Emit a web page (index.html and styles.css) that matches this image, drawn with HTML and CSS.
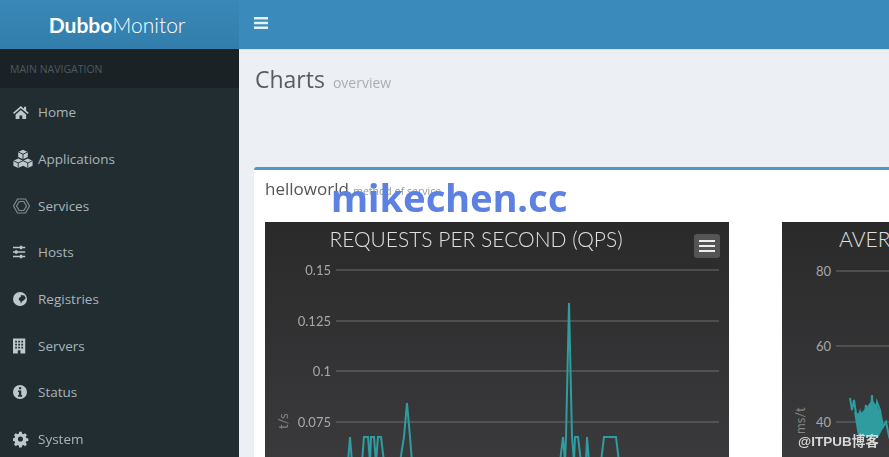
FILE: index.html
```html
<!DOCTYPE html>
<html lang="zh">
  <head>
    <meta charset="UTF-8" />
    <meta name="viewport" content="width=device-width, initial-scale=1" />
    <title>DubboMonitor – Charts</title>
    <link rel="stylesheet" href="styles.css">
  </head>
  <body>
    <div class="wrapper">
      <aside class="sidebar">
        <div class="logo"><b>Dubbo</b>Monitor</div>
        <div class="nav-header">MAIN NAVIGATION</div>
        <nav class="nav">
          <a href="#">
            <svg class="nav-icon" viewBox="1 -1.430 22.860 22.860"><path d="M10 3 1 11l1.200 1.300L10 5.600l7.800 6.700L19 11l-3-2.600V4h-2.400v2.300zM4 13v5h4.400v-4h3.200v4H16v-5l-6-5.200z"/></svg>
            Home
          </a>
          <a href="#">
            <svg class="nav-icon icon-cubes" viewBox="0.400 0.400 19.200 19.200"><path d="m10 1 4.600 2.200v4.800L10 10.200 5.400 8V3.200zM5.400 9.400 10 11.600v4.800l-4.600 2.300-4.600-2.300v-4.800zm9.200 0 4.600 2.200v4.800l-4.600 2.300-4.600-2.300v-4.800z"/><path class="cube-edge" d="M5.400 3.200 10 5.400l4.600-2.200M10 5.400V10M.8 11.600l4.600 2.200 4.600-2.200M5.400 13.800v4.600M10 11.600l4.600 2.200 4.600-2.200M14.600 13.800v4.600"/></svg>
            Applications
          </a>
          <a href="#">
            <svg class="nav-icon nav-icon-line" viewBox="1.500 0 20 20"><path d="M2 10 6 3h8l4 7-4 7H6z"/><path d="M5 10 7.700 5.500h4.600L15 10l-2.700 4.500H7.700z"/></svg>
            Services
          </a>
          <a href="#">
            <svg class="nav-icon" viewBox="3 -1.430 22.860 22.860"><path d="M3 4h8V2.800h2.500V4H17v1.600h-3.500v1.200H11V5.600H3zm0 5.200h2.500V8H8v1.200h9v1.600H8V12H5.500v-1.200H3zm0 5.200h8v-1.200h2.500v1.200H17V16h-3.500v1.200H11V16H3z"/></svg>
            Hosts
          </a>
          <a href="#">
            <svg class="nav-icon" viewBox="2 -1.430 22.860 22.860"><path fill-rule="evenodd" d="M10 2a8 8 0 1 0 0 16 8 8 0 0 0 0-16zM11 5.500l4 .5 1.500 3-2 2.500-2 1-1.500 3-.5-3-2-1.500.5-2.500 2-1z"/></svg>
            Registries
          </a>
          <a href="#">
            <svg class="nav-icon" viewBox="3 -1.430 22.860 22.860"><path fill-rule="evenodd" d="M3 1.500h14v17H3zM5.500 4v2h2V4zm3.500 0v2h2V4zm3.500 0v2h2V4zM5.500 7.500v2h2v-2zm3.500 0v2h2v-2zm3.500 0v2h2v-2zM5.500 11v2h2v-2zm3.500 0v2h2v-2zm3.500 0v2h2v-2zM8.500 15v3.500h3V15z"/></svg>
            Servers
          </a>
          <a href="#">
            <svg class="nav-icon" viewBox="2 -1.430 22.860 22.860"><path fill-rule="evenodd" d="M10 2a8 8 0 1 0 0 16 8 8 0 0 0 0-16zM8.800 4.500h2.600v2.400H8.800zM7.800 8.200h3.600v5.300h1v1.800H7.800v-1.800h1V10h-1z"/></svg>
            Status
          </a>
          <a href="#">
            <svg class="nav-icon" viewBox="1.500 -1.430 22.860 22.860"><path fill-rule="evenodd" d="M8.500 1.800h3l.4 2.300 1.500.6 1.900-1.300 2.100 2.100-1.300 1.900.6 1.500 2.300.4v3l-2.300.4-.6 1.500 1.300 1.900-2.100 2.100-1.900-1.300-1.500.6-.4 2.300h-3l-.4-2.300-1.500-.6-1.900 1.300-2.100-2.100 1.300-1.900-.6-1.500-2.300-.4v-3l2.300-.4.6-1.500-1.300-1.900 2.100-2.100 1.900 1.300 1.500-.6zM10 7.100a2.900 2.900 0 1 0 0 5.800 2.900 2.900 0 0 0 0-5.800z"/></svg>
            System
          </a>
        </nav>
      </aside>

      <div class="main">
        <header class="topbar">
          <svg class="menu-toggle" viewBox="0 0 14 14"><path d="M0 1h14v2.400H0zM0 5.800h14v2.400H0zM0 10.600h14V13H0z"/></svg>
        </header>

        <section class="content-header">
          <h1>Charts <small>overview</small></h1>
        </section>

        <section class="box">
          <h3 class="box-title">helloworld <small>method of service</small></h3>
          <div class="charts">
            <div class="chart">
              <svg class="chart-svg" viewBox="0 0 464 235">
                <text class="chart-title" x="211" y="25" text-anchor="middle">REQUESTS PER SECOND (QPS)</text>
                <path class="grid" d="M71 48H454M71 99H454M71 149H454M71 200H454"/>
                <text class="tick" x="66" y="53" text-anchor="end">0.15</text>
                <text class="tick" x="66" y="104" text-anchor="end">0.125</text>
                <text class="tick" x="66" y="154" text-anchor="end">0.1</text>
                <text class="tick" x="66" y="205" text-anchor="end">0.075</text>
                <text class="axis-title" transform="translate(23 207) rotate(-90)">t/s</text>
                <polyline class="series" points="83,240 85,215 87,240 97,240 99,215 103,215 105,240 106,215 109,215 111,240 113,215 116,215 119,240 135,240 139,215 142,181 145,215 147,240 295,240 298,215 300,240 301,215 304,81 307,215 309,240 310,215 313,215 316,240 321,240 322,215 324,240 336,240 339,215 351,215 354,240"/>
              </svg>
              <div class="chart-menu"><span></span><span></span><span></span></div>
            </div>
            <div class="chart">
              <svg class="chart-svg" viewBox="0 0 464 235">
                <text class="chart-title" x="57" y="25">AVERAGE RESPONSE TIME (MS)</text>
                <path class="grid" d="M54 49H464M54 124H464M54 200H464"/>
                <text class="tick" x="49" y="54" text-anchor="end">80</text>
                <text class="tick" x="49" y="129" text-anchor="end">60</text>
                <text class="tick" x="49" y="205" text-anchor="end">40</text>
                <text class="axis-title" transform="translate(23 212) rotate(-90)">ms/t</text>
                <path class="series-fill" d="M72 190 78 192 84 186 90 178 95 184 98 190 101 206 96 216 76 214z"/>
                <polyline class="series" points="68,176 70,188 72,178 75,198 78,190 81,205 84,183 86,200 88,205 90,173 92,200 95,180 98,188 101,205 104,200 107,214 110,208"/>
              </svg>
            </div>
          </div>
        </section>
      </div>
    </div>

    <div class="mark-site">mikechen.cc</div>
    <div class="mark-itpub">@ITPUB博客</div>
  </body>
</html>
```

FILE: styles.css
```css
html,
body {
  margin: 0;
  height: 100%;
  overflow: hidden;
}

body {
  font-family: "Open Sans", "Noto Sans", sans-serif;
  background: #ecf0f5;
  color: #444;
}

.wrapper {
  display: grid;
  grid-template-columns: 239px 1fr;
  height: 457px;
  filter: blur(0.5px);
}

.sidebar {
  background: #222d32;
}

.logo {
  height: 49px;
  padding-right: 5px;
  line-height: 49px;
  text-align: center;
  font-family: "Lato", sans-serif;
  font-size: 21px;
  font-weight: 300;
  color: #fff;
  background: linear-gradient(#3a88b8, #327dab);
  box-sizing: border-box;
}

.logo b {
  font-weight: 700;
}

.nav-header {
  height: 39px;
  line-height: 41px;
  padding-left: 10px;
  font-size: 10.500px;
  color: #4b5a60;
  background: #1a2226;
}

.nav {
  padding-top: 1px;
}

.nav a {
  display: flex;
  align-items: center;
  gap: 5px;
  height: 46.700px;
  padding-left: 13px;
  font-size: 13.500px;
  color: #a8b5ba;
  text-decoration: none;
}

.nav-icon {
  width: 20px;
  height: 20px;
  fill: #bcc8cc;
  flex: none;
}

.nav-icon-line {
  fill: none;
  stroke: #7f8c90;
  stroke-width: 1.200;
}

.icon-cubes .cube-edge {
  fill: none;
  stroke: #222d32;
  stroke-width: 0.900;
}

.main {
  min-width: 0;
}

.topbar {
  display: flex;
  align-items: center;
  height: 50px;
  padding-left: 15px;
  background: #3a8abb;
  border-bottom: 1px solid #cfe3ee;
  box-sizing: border-box;
}

.menu-toggle {
  width: 14px;
  height: 14px;
  fill: #e3f1f8;
  margin-top: -3px;
}

.content-header {
  height: 117px;
  padding: 13px 16px 0;
  box-sizing: border-box;
}

.content-header h1 {
  margin: 0;
  font-size: 23px;
  font-weight: 400;
  line-height: 32px;
  color: #555c62;
}

.content-header small {
  margin-left: 2px;
  font-size: 14px;
  font-weight: 400;
  color: #a9aeb3;
}

.box {
  margin-left: 15px;
  padding: 9px 11px 0;
  height: 290px;
  background: #fff;
  border-top: 3px solid #4a9ac4;
  border-radius: 3px 0 0 0;
  box-sizing: border-box;
}

.box-title {
  margin: 0 0 21px;
  height: 22px;
  font-size: 17px;
  font-weight: 500;
  line-height: 20px;
  color: #555;
}

.box-title small {
  font-size: 10.500px;
  font-weight: 400;
  color: #999;
}

.charts {
  display: flex;
  gap: 53px;
}

.chart {
  position: relative;
  flex: none;
  width: 464px;
  height: 235px;
  background: linear-gradient(#2a2a2b, #3a3a3c);
}

.chart-svg {
  display: block;
  width: 464px;
  height: 235px;
  overflow: hidden;
}

.chart-title {
  font-family: "Lato", sans-serif;
  font-size: 21px;
  font-weight: 300;
  fill: #e0e0e0;
}

.grid {
  fill: none;
  stroke: #6e6e6e;
  stroke-width: 1;
}

.tick {
  font-family: "Lato", sans-serif;
  font-size: 13px;
  fill: #a8a8a8;
}

.axis-title {
  font-family: "Lato", sans-serif;
  font-size: 13px;
  fill: #848484;
}

.series {
  fill: none;
  stroke: #2f9c9f;
  stroke-width: 2;
}

.series-fill {
  fill: #2f9c9f;
}

.chart-menu {
  position: absolute;
  top: 12px;
  right: 9px;
  display: flex;
  flex-direction: column;
  justify-content: center;
  gap: 2.500px;
  width: 26px;
  height: 24px;
  padding: 0 5px;
  background: #555;
  border-radius: 3px;
  box-sizing: border-box;
}

.chart-menu span {
  height: 2.500px;
  background: #eee;
}

.mark-site {
  position: absolute;
  left: 331px;
  top: 172px;
  font-family: "Noto Sans", sans-serif;
  font-size: 38px;
  font-weight: 700;
  line-height: 50px;
  color: #5c81e2;
  filter: blur(0.4px);
}

.mark-itpub {
  position: absolute;
  left: 798px;
  top: 433px;
  font-family: "Liberation Sans", "Noto Sans CJK SC", sans-serif;
  font-size: 13.500px;
  font-weight: 700;
  line-height: 18px;
  color: #d8d8d8;
  filter: blur(0.4px);
}
```
